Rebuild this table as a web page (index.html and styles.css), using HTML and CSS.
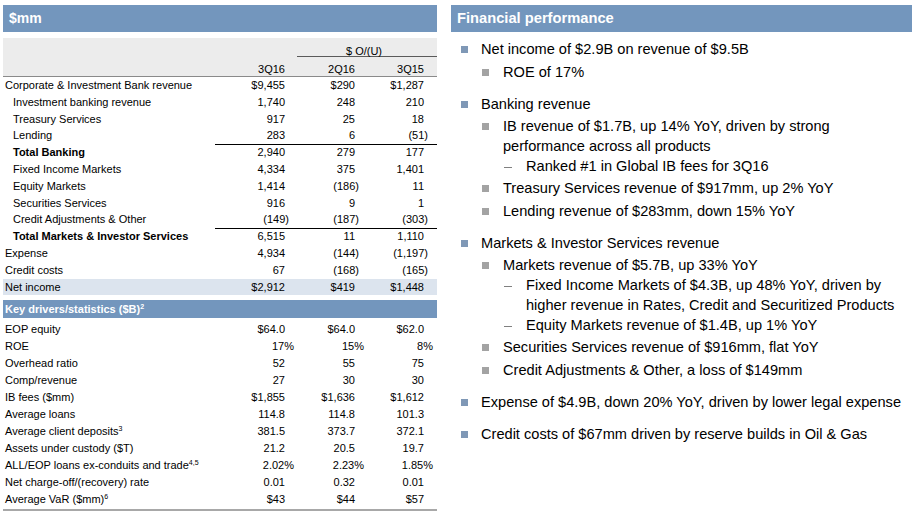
FILE: index.html
```html
<!DOCTYPE html>
<html>
<head>
<meta charset="utf-8">
<link rel="stylesheet" href="styles.css">
</head>
<body>
<div class="page">
  <section class="left">
    <div class="hdr">$mm</div>
    <div class="band">
      <div class="row r-ou"><span class="ou">$ O/(U)</span></div>
      <div class="row r-cols"><span></span><span class="v">3Q16</span><span class="v">2Q16</span><span class="v">3Q15</span></div>
    </div>
    <div class="rows">
      <div class="row"><span class="lab">Corporate &amp; Investment Bank revenue</span><span class="v">$9,455</span><span class="v">$290</span><span class="v">$1,287</span></div>
      <div class="row"><span class="lab l2">Investment banking revenue</span><span class="v">1,740</span><span class="v">248</span><span class="v">210</span></div>
      <div class="row"><span class="lab l2">Treasury Services</span><span class="v">917</span><span class="v">25</span><span class="v">18</span></div>
      <div class="row"><span class="lab l2">Lending</span><span class="v">283</span><span class="v">6</span><span class="v neg">(51)</span></div>
      <div class="row total"><span class="lab l2">Total Banking</span><span class="v">2,940</span><span class="v">279</span><span class="v">177</span></div>
      <div class="row"><span class="lab l2">Fixed Income Markets</span><span class="v">4,334</span><span class="v">375</span><span class="v">1,401</span></div>
      <div class="row"><span class="lab l2">Equity Markets</span><span class="v">1,414</span><span class="v neg">(186)</span><span class="v">11</span></div>
      <div class="row"><span class="lab l2">Securities Services</span><span class="v">916</span><span class="v">9</span><span class="v">1</span></div>
      <div class="row"><span class="lab l2">Credit Adjustments &amp; Other</span><span class="v neg">(149)</span><span class="v neg">(187)</span><span class="v neg">(303)</span></div>
      <div class="row total"><span class="lab l2">Total Markets &amp; Investor Services</span><span class="v">6,515</span><span class="v">11</span><span class="v">1,110</span></div>
      <div class="row"><span class="lab">Expense</span><span class="v">4,934</span><span class="v neg">(144)</span><span class="v neg">(1,197)</span></div>
      <div class="row"><span class="lab">Credit costs</span><span class="v">67</span><span class="v neg">(168)</span><span class="v neg">(165)</span></div>
      <div class="row net"><span class="lab">Net income</span><span class="v">$2,912</span><span class="v">$419</span><span class="v">$1,448</span></div>
    </div>
    <div class="khdr">Key drivers/statistics ($B)<sup>2</sup></div>
    <div class="krows">
      <div class="row"><span class="lab">EOP equity</span><span class="v">$64.0</span><span class="v">$64.0</span><span class="v">$62.0</span></div>
      <div class="row"><span class="lab">ROE</span><span class="v pct">17%</span><span class="v pct">15%</span><span class="v pct">8%</span></div>
      <div class="row"><span class="lab">Overhead ratio</span><span class="v">52</span><span class="v">55</span><span class="v">75</span></div>
      <div class="row"><span class="lab">Comp/revenue</span><span class="v">27</span><span class="v">30</span><span class="v">30</span></div>
      <div class="row"><span class="lab">IB fees ($mm)</span><span class="v">$1,855</span><span class="v">$1,636</span><span class="v">$1,612</span></div>
      <div class="row"><span class="lab">Average loans</span><span class="v">114.8</span><span class="v">114.8</span><span class="v">101.3</span></div>
      <div class="row"><span class="lab">Average client deposits<sup>3</sup></span><span class="v">381.5</span><span class="v">373.7</span><span class="v">372.1</span></div>
      <div class="row"><span class="lab">Assets under custody ($T)</span><span class="v">21.2</span><span class="v">20.5</span><span class="v">19.7</span></div>
      <div class="row"><span class="lab">ALL/EOP loans ex-conduits and trade<sup>4,5</sup></span><span class="v pct">2.02%</span><span class="v pct">2.23%</span><span class="v pct">1.85%</span></div>
      <div class="row"><span class="lab">Net charge-off/(recovery) rate</span><span class="v">0.01</span><span class="v">0.32</span><span class="v">0.01</span></div>
      <div class="row"><span class="lab">Average VaR ($mm)<sup>6</sup></span><span class="v">$43</span><span class="v">$44</span><span class="v">$57</span></div>
    </div>
  </section>
  <section class="right">
    <div class="hdr rhdr">Financial performance</div>
    <ul class="bl">
      <li><span class="t">Net income of $2.9B on revenue of $9.5B</span>
        <ul class="sub">
          <li><span class="t">ROE of 17%</span></li>
        </ul>
      </li>
      <li><span class="t">Banking revenue</span>
        <ul class="sub">
          <li><span class="t">IB revenue of $1.7B, up 14% YoY, driven by strong performance across all products</span>
            <ul class="sub3">
              <li><span class="t">Ranked #1 in Global IB fees for 3Q16</span></li>
            </ul>
          </li>
          <li><span class="t">Treasury Services revenue of $917mm, up 2% YoY</span></li>
          <li><span class="t">Lending revenue of $283mm, down 15% YoY</span></li>
        </ul>
      </li>
      <li><span class="t">Markets &amp; Investor Services revenue</span>
        <ul class="sub">
          <li><span class="t">Markets revenue of $5.7B, up 33% YoY</span>
            <ul class="sub3">
              <li><span class="t">Fixed Income Markets of $4.3B, up 48% YoY, driven by higher revenue in Rates, Credit and Securitized Products</span></li>
              <li><span class="t">Equity Markets revenue of $1.4B, up 1% YoY</span></li>
            </ul>
          </li>
          <li><span class="t">Securities Services revenue of $916mm, flat YoY</span></li>
          <li><span class="t">Credit Adjustments &amp; Other, a loss of $149mm</span></li>
        </ul>
      </li>
      <li><span class="t nw">Expense of $4.9B, down 20% YoY, driven by lower legal expense</span></li>
      <li><span class="t">Credit costs of $67mm driven by reserve builds in Oil &amp; Gas</span></li>
    </ul>
  </section>
</div>
</body>
</html>
```

FILE: styles.css
```css
* { box-sizing: border-box; }
html, body { margin: 0; padding: 0; background: #fff; }
body {
  font-family: "Liberation Sans", Arial, sans-serif;
  color: #000;
  width: 917px;
  height: 516px;
  overflow: hidden;
}
.page {
  display: flex;
  gap: 14px;
  padding: 5px 0 0 3px;
}
.left { width: 434px; flex: none; }
.right { width: 461px; flex: none; }

.hdr {
  height: 27px;
  background: #7396bd;
  color: #fff;
  font-weight: bold;
  font-size: 14px;
  line-height: 27px;
  padding-left: 6px;
}
.rhdr { font-size: 14.7px; padding-left: 6px; }

/* table */
.row {
  display: grid;
  grid-template-columns: 212px 74px 70px 69px;
  font-size: 11px;
  height: 16.8px;
  line-height: 16.8px;
  white-space: nowrap;
}
.lab { padding-left: 2px; }
.lab.l2 { padding-left: 10px; }
.total .lab { font-weight: bold; }
.v { text-align: right; padding-right: 4px; }
.v.neg { padding-right: 0; }
.v.pct { padding-right: 0; margin-right: -5px; }

.band {
  margin-top: 6px;
  background: #ececec;
  border-bottom: 1px solid #8a8a8a;
}
.r-ou {
  height: 19px;
  line-height: 11px;
  padding-top: 8px;
  display: block;
  background: linear-gradient(#5a5a5a, #5a5a5a) no-repeat 294px 18px / 140px 1px;
}
.ou { display: block; margin-left: 294px; text-align: center; padding-right: 6px; }
.r-cols {
  height: 19px;
  line-height: 11px;
  padding-top: 7px;
}
.total {
  background: linear-gradient(#000, #000) no-repeat 212px 0 / 222px 1px;
}
.net { background: #dce4ee; }

.khdr {
  margin-top: 5px;
  height: 18px;
  line-height: 18px;
  background: #7396bd;
  color: #fff;
  font-weight: bold;
  font-size: 11px;
  padding-left: 2px;
}
sup { font-size: 7px; line-height: 0; vertical-align: 4px; }
.khdr sup { font-size: 7px; }
.krows {
  margin-top: 3px;
  padding-bottom: 1px;
  border-bottom: 2px solid #a8a8a8;
}
.krows .row { height: 17px; line-height: 17px; }

/* bullets */
ul { list-style: none; margin: 0; padding: 0; }
.bl {
  padding-top: 8px;
  font-size: 14.6px;
  line-height: 19.5px;
}
.bl > li {
  display: grid;
  grid-template-columns: 20px 1fr;
  padding-left: 10px;
  margin-top: 12.5px;
}
.bl > li:first-child { margin-top: 0; }
.bl li::before {
  content: "";
  grid-column: 1;
  grid-row: 1;
  width: 7px;
  height: 7px;
  margin-top: 6px;
  background: #7f98b6;
}
.t { grid-column: 2; grid-row: 1; }
.t.nw { white-space: nowrap; }
.sub, .sub3 { grid-column: 2; grid-row: 2; padding-left: 1px; }
.sub > li {
  display: grid;
  grid-template-columns: 21px 1fr;
  margin-top: 3px;
}
.sub > li::before { background: #a3a3a3; }
.sub3 > li {
  display: grid;
  grid-template-columns: 22px 1fr;
  margin-top: 0.5px;
}
.sub3 > li::before {
  width: 8px;
  height: 1px;
  margin-top: 10px;
  background: #808080;
}
```
